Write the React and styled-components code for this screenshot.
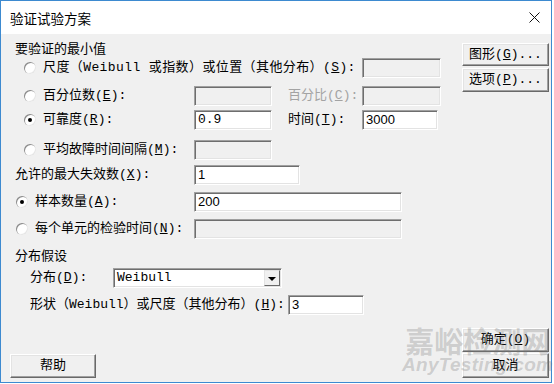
import React from "react";
import styled, { createGlobalStyle } from "styled-components";

const LABEL_FONT = `"Liberation Mono", "Noto Sans CJK SC", monospace`;

const GlobalStyle = createGlobalStyle`
	html, body {
		margin: 0;
		padding: 0;
		background: #fff;
	}
	body {
		width: 554px;
		height: 384px;
		overflow: hidden;
	}
`;

const Window = styled.div`
	position: relative;
	width: 552px;
	height: 383px;
	box-sizing: border-box;
	border: 1px solid #3d8ad0;
	display: flex;
	flex-direction: column;
	background: #f0f0f0;
	font-family: ${LABEL_FONT};
	font-size: 13px;
	color: #000;
`;

const TitleBar = styled.div`
	flex: 0 0 33px;
	background: #fff;
	display: flex;
	align-items: center;
	justify-content: space-between;
	padding: 0 11px 0 9px;
`;

const Title = styled.span`
	font-family: "Noto Sans CJK SC", sans-serif;
	font-size: 13.5px;
	line-height: 16px;
	color: #000;
	margin-top: 1px;
`;

const Body = styled.div`
	flex: 1;
	display: flex;
`;

const Main = styled.div`
	flex: 1;
	display: flex;
	flex-direction: column;
	padding: 0 0 4px 9px;
`;

const Side = styled.div`
	flex: 0 0 87px;
	display: flex;
	flex-direction: column;
	justify-content: space-between;
	padding: 9px 2px 4px 0;
`;

const Stack = styled.div`
	display: flex;
	flex-direction: column;
	gap: ${({ $gap }) => $gap || 2}px;
`;

const SectionTitle = styled.div`
	height: 16px;
	line-height: 16px;
	padding-left: 5px;
	margin-top: ${({ $mt }) => $mt || 0}px;
	white-space: nowrap;
`;

const Row = styled.div`
	display: flex;
	align-items: center;
	height: 20px;
	margin-top: ${({ $mt }) => $mt || 0}px;
`;

const Lead = styled.div`
	flex: 0 0 ${({ $w }) => $w}px;
	min-width: 0;
	box-sizing: border-box;
	display: flex;
	align-items: center;
	padding-left: ${({ $indent }) => $indent || 0}px;
	line-height: 16px;
	letter-spacing: ${({ $ls }) => $ls || 0}px;
	white-space: nowrap;
	color: ${({ $disabled }) => ($disabled ? "#a3a3a3" : "#000")};
`;

const SubLabel = styled(Lead)`
	margin-left: 16px;
`;

const Radio = styled.span`
	position: relative;
	flex: 0 0 12px;
	height: 12px;
	margin-right: 7px;
	border-radius: 50%;
	background: #fff;
	box-shadow: inset 1px 1px 0 #8a8a8a, inset -1px -1px 0 #e6e6e6;

	&::after {
		content: "";
		display: ${({ $checked }) => ($checked ? "block" : "none")};
		position: absolute;
		left: 4px;
		top: 4px;
		width: 4px;
		height: 4px;
		border-radius: 50%;
		background: #000;
	}
`;

const TextBox = styled.div`
	flex: 0 0 ${({ $w }) => $w}px;
	height: 20px;
	box-sizing: border-box;
	border: 1px solid;
	border-color: #a0a0a0 #fff #fff #a0a0a0;
	box-shadow: inset 1px 1px 0 #6e6e6e, inset -1px -1px 0 #e3e3e3;
	background: ${({ $disabled }) => ($disabled ? "#f0f0f0" : "#fff")};
	padding: 1px 0 0 3px;
	font-family: ${({ $mono }) =>
		$mono ? LABEL_FONT : `"Liberation Sans", Arial, sans-serif`};
	font-size: 13px;
	line-height: 16px;
	color: #000;
`;

const Select = styled(TextBox)`
	display: flex;
	align-items: center;
	padding: 0 1px 0 3px;
	font-family: ${LABEL_FONT};
`;

const SelectValue = styled.span`
	flex: 1;
`;

const DropButton = styled.span`
	flex: 0 0 16px;
	height: 16px;
	box-sizing: border-box;
	display: flex;
	align-items: center;
	justify-content: center;
	background: #f0f0f0;
	border: 1px solid;
	border-color: #e3e3e3 #696969 #696969 #e3e3e3;

	&::before {
		content: "";
		border-left: 4px solid transparent;
		border-right: 4px solid transparent;
		border-top: 4px solid #000;
		margin-top: 1px;
	}
`;

const Button = styled.button`
	width: ${({ $w }) => $w || 87}px;
	height: ${({ $h }) => $h || 24}px;
	box-sizing: border-box;
	margin: 0;
	padding: 0;
	background: #f0f0f0;
	border: 1px solid;
	border-color: #fff #696969 #696969 #fff;
	box-shadow: inset -1px -1px 0 #a0a0a0, inset 1px 1px 0 #e3e3e3;
	font-family: ${LABEL_FONT};
	font-size: 13px;
	line-height: 16px;
	color: #000;
	white-space: nowrap;
`;

const HelpButton = styled(Button)`
	margin-top: auto;
`;

const Watermark = styled.div`
	position: absolute;
	left: 401px;
	top: 323px;
	pointer-events: none;
	display: flex;
	flex-direction: column;
	align-items: center;
	color: rgba(120, 120, 120, 0.3);
`;

const WatermarkCn = styled.span`
	font-family: "Noto Sans CJK SC", sans-serif;
	font-weight: 700;
	font-size: 29px;
	line-height: 32px;
`;

const WatermarkEn = styled.span`
	font-family: "Liberation Sans", Arial, sans-serif;
	font-style: italic;
	font-weight: 700;
	font-size: 19px;
	line-height: 18px;
	letter-spacing: 0.3px;
`;

const CloseIcon = () => (
	<svg width="11" height="11" viewBox="0 0 11 11">
		<path d="M0.5 0.5 L10.5 10.5 M10.5 0.5 L0.5 10.5" stroke="#111" strokeWidth="1" />
	</svg>
);

const App = () => {
	return (
		<>
			<GlobalStyle />
			<Window>
				<TitleBar>
					<Title>验证试验方案</Title>
					<CloseIcon />
				</TitleBar>
				<Body>
					<Main>
						<SectionTitle $mt={8}>要验证的最小值</SectionTitle>
						<Row>
							<Lead $w={352} $indent={14} $ls={0.4}>
								<Radio />
								尺度（Weibull 或指数）或位置（其他分布）(<u>S</u>):
							</Lead>
							<TextBox $w={79} $disabled />
						</Row>
						<Row $mt={8}>
							<Lead $w={184} $indent={14}>
								<Radio />
								百分位数(<u>E</u>):
							</Lead>
							<TextBox $w={78} $disabled />
							<SubLabel $w={74} $disabled>
								百分比(<u>C</u>):
							</SubLabel>
							<TextBox $w={79} $disabled />
						</Row>
						<Row $mt={4}>
							<Lead $w={184} $indent={14}>
								<Radio $checked />
								可靠度(<u>R</u>):
							</Lead>
							<TextBox $w={78} $mono>
								0.9
							</TextBox>
							<SubLabel $w={74}>
								时间(<u>T</u>):
							</SubLabel>
							<TextBox $w={76}>3000</TextBox>
						</Row>
						<Row $mt={10}>
							<Lead $w={184} $indent={14}>
								<Radio />
								平均故障时间间隔(<u>M</u>):
							</Lead>
							<TextBox $w={78} $disabled />
						</Row>
						<Row $mt={5}>
							<Lead $w={184} $indent={5}>
								允许的最大失效数(<u>X</u>):
							</Lead>
							<TextBox $w={106}>1</TextBox>
						</Row>
						<Row $mt={7}>
							<Lead $w={184} $indent={6}>
								<Radio $checked />
								样本数量(<u>A</u>):
							</Lead>
							<TextBox $w={208}>200</TextBox>
						</Row>
						<Row $mt={7}>
							<Lead $w={184} $indent={6}>
								<Radio />
								每个单元的检验时间(<u>N</u>):
							</Lead>
							<TextBox $w={208} $disabled />
						</Row>
						<SectionTitle $mt={10}>分布假设</SectionTitle>
						<Row $mt={3}>
							<Lead $w={103} $indent={20}>
								分布(<u>D</u>):
							</Lead>
							<Select $w={169}>
								<SelectValue>Weibull</SelectValue>
								<DropButton />
							</Select>
						</Row>
						<Row $mt={7}>
							<Lead $w={278} $indent={20}>
								形状（Weibull）或尺度（其他分布）(<u>H</u>):
							</Lead>
							<TextBox $w={76}>3</TextBox>
						</Row>
						<HelpButton $w={86} $h={24}>
							帮助
						</HelpButton>
					</Main>
					<Side>
						<Stack $gap={2}>
							<Button $h={23}>
								图形(<u>G</u>)...
							</Button>
							<Button $h={24}>
								选项(<u>P</u>)...
							</Button>
						</Stack>
						<Stack $gap={1}>
							<Button $h={24}>
								确定(<u>O</u>)
							</Button>
							<Button $h={25}>取消</Button>
						</Stack>
					</Side>
				</Body>
				<Watermark>
					<WatermarkCn>嘉峪检测网</WatermarkCn>
					<WatermarkEn>AnyTesting.com</WatermarkEn>
				</Watermark>
			</Window>
		</>
	);
};

export default App;
